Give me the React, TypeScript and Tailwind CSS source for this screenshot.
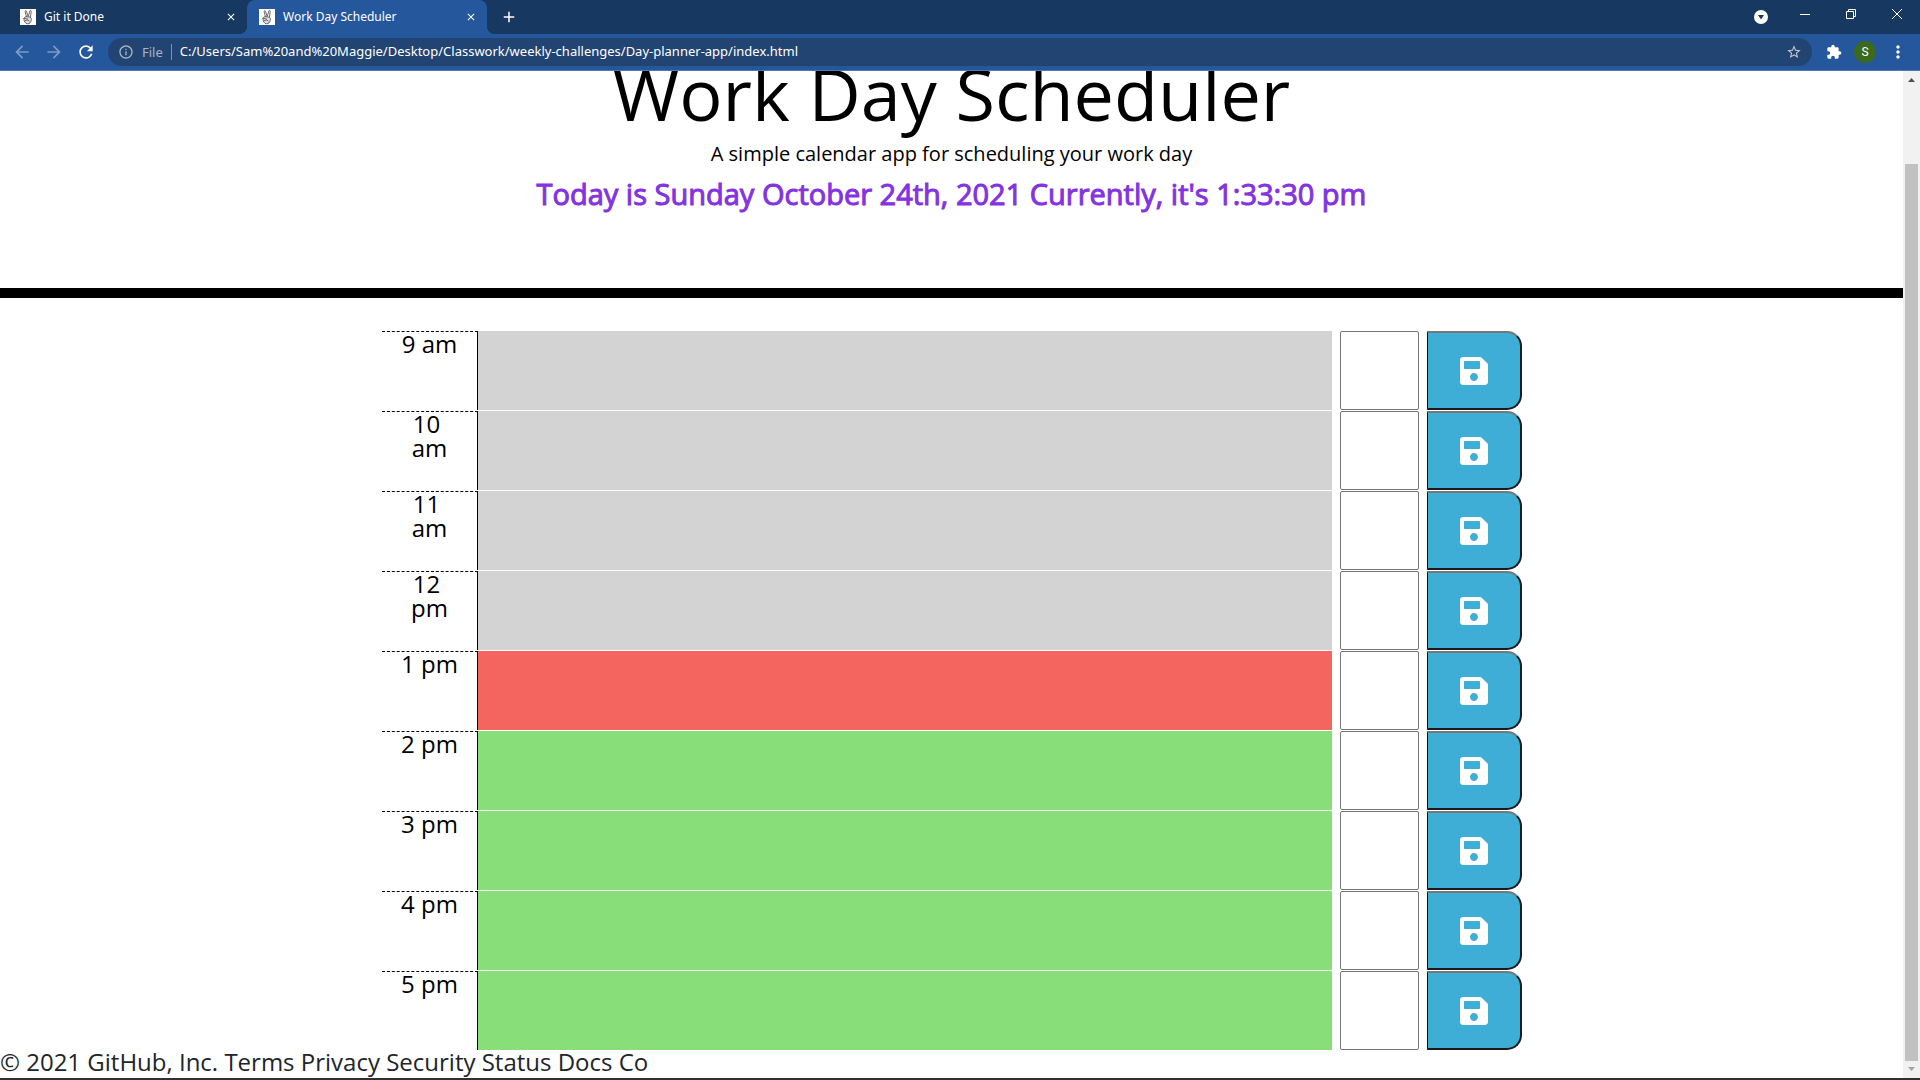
import { FaSave } from 'react-icons/fa';
import { MdArrowBack, MdArrowForward, MdRefresh, MdExtension, MdMoreVert, MdStarBorder, MdInfoOutline, MdClose, MdAdd } from 'react-icons/md';

type Phase = 'past' | 'present' | 'future';

const hours: { label: string; phase: Phase }[] = [
  { label: '9 am', phase: 'past' },
  { label: '10 am', phase: 'past' },
  { label: '11 am', phase: 'past' },
  { label: '12 pm', phase: 'past' },
  { label: '1 pm', phase: 'present' },
  { label: '2 pm', phase: 'future' },
  { label: '3 pm', phase: 'future' },
  { label: '4 pm', phase: 'future' },
  { label: '5 pm', phase: 'future' },
];

const phaseColor: Record<Phase, string> = {
  past: 'bg-[#d3d3d3]',
  present: 'bg-[#f56560]',
  future: 'bg-[#88de79]',
};

function Favicon() {
  return (
    <svg viewBox="0 0 16 16" className="size-4 shrink-0 bg-white" fill="none" stroke="#444" strokeWidth=".8" strokeLinejoin="round" strokeLinecap="round">
      <path d="M6.500 8L5.200 2.600c-.2-1 1-1.300 1.300-.4L8 7M8.500 7l1.300-5c.3-1 1.600-.7 1.400.3L10.500 8" />
      <path d="M4 9.500c.4-1.500 1.800-2.200 3-1.800l3 .4c1.400.4 1.600 2 1.200 3.400-.4 2-1.700 3.300-3.600 3.300C5.300 14.800 3.600 12 4 9.500z" fill="#ddd" />
      <path d="M5.500 9.500l2 .5M5.500 11.500l2-.5 1.500 1" />
    </svg>
  );
}

function Tab({ title, active }: { title: string; active?: boolean }) {
  return (
    <div
      className={
        active
          ? 'relative flex h-full w-[240px] items-center rounded-t-lg bg-[#24579c] pr-2.5 pl-3'
          : 'flex h-full w-[247px] items-center pr-2.5 pl-5'
      }
    >
      {active && (
        <>
          <span className="absolute bottom-0 -left-2 size-2 bg-[radial-gradient(circle_at_0_0,#163861_8px,#24579c_8px)]" />
          <span className="absolute -right-2 bottom-0 size-2 bg-[radial-gradient(circle_at_100%_0,#163861_8px,#24579c_8px)]" />
        </>
      )}
      <Favicon />
      <span className="ml-2 flex-1 truncate text-xs text-white">{title}</span>
      <button type="button" aria-label={`Close ${title}`} className="text-white">
        <MdClose className="size-3" />
      </button>
    </div>
  );
}

function BrowserChrome() {
  return (
    <div className="shrink-0 font-['Noto_Sans','Open_Sans',sans-serif]">
      <div className="flex h-[34px] items-center bg-[#163861]">
        <Tab title="Git it Done" />
        <Tab title="Work Day Scheduler" active />
        <button type="button" aria-label="New tab" className="ml-[13px] text-white">
          <MdAdd className="size-[18px]" />
        </button>
        <div className="mr-[18px] ml-auto flex h-full items-center text-white">
          <button type="button" aria-label="Search tabs" className="mr-8">
            <svg viewBox="0 0 14 14" className="size-3.5">
              <circle cx="7" cy="7" r="7" fill="#fff" />
              <path d="M4 5h6L7 9.500z" fill="#163861" />
            </svg>
          </button>
          <button type="button" aria-label="Minimize" className="mr-9">
            <svg viewBox="0 0 10 10" className="mb-1.5 size-2.5">
              <path d="M0 5.500h10" stroke="#fff" />
            </svg>
          </button>
          <button type="button" aria-label="Restore" className="mr-9">
            <svg viewBox="0 0 10 10" className="mb-1.5 size-2.5" fill="none" stroke="#fff">
              <path d="M.5 2.500h7v7h-7zM2.500 2.500v-2h7v7h-2" />
            </svg>
          </button>
          <button type="button" aria-label="Close window">
            <svg viewBox="0 0 10 10" className="mb-1.5 size-2.5" stroke="#fff">
              <path d="M0 0l10 10M10 0L0 10" />
            </svg>
          </button>
        </div>
      </div>
      <div className="flex h-[37px] items-center border-b border-[#4f7ab5] bg-[#24579c] text-white">
        <button type="button" aria-label="Back" className="ml-3 text-[#7c9bc6]">
          <MdArrowBack className="size-5" />
        </button>
        <button type="button" aria-label="Forward" className="ml-3 text-[#7c9bc6]">
          <MdArrowForward className="size-5" />
        </button>
        <button type="button" aria-label="Reload" className="ml-3">
          <MdRefresh className="size-5" />
        </button>
        <div className="ml-3 flex h-7 flex-1 items-center rounded-full bg-[#224472] px-2.5">
          <MdInfoOutline className="size-4 shrink-0 text-[#a7b4c7]" />
          <span className="ml-2 border-r border-[#8193ac] pr-2 text-[13px] leading-4 text-[#a7b4c7]">File</span>
          <input
            type="text"
            aria-label="Address"
            readOnly
            value="C:/Users/Sam%20and%20Maggie/Desktop/Classwork/weekly-challenges/Day-planner-app/index.html"
            className="ml-2 min-w-0 flex-1 bg-transparent text-[13px] text-white outline-none"
          />
          <button type="button" aria-label="Bookmark" className="text-[#c3cad4]">
            <MdStarBorder className="size-4" />
          </button>
        </div>
        <button type="button" aria-label="Extensions" className="ml-3.5">
          <MdExtension className="size-4" />
        </button>
        <button
          type="button"
          aria-label="Profile"
          className="ml-3 flex size-[22px] items-center justify-center rounded-full bg-[#3b691d] font-['Roboto',sans-serif] text-xs"
        >
          S
        </button>
        <button type="button" aria-label="Menu" className="mr-3 ml-3">
          <MdMoreVert className="size-5" />
        </button>
      </div>
    </div>
  );
}

function TimeBlock({ label, phase }: { label: string; phase: Phase }) {
  return (
    <div className="grid h-[79px] grid-cols-[96px_1fr_95px_95px]">
      <div className="border-t border-r border-t-black border-r-black px-[15px] text-center whitespace-break-spaces [border-top-style:dashed]">
        {label}
      </div>
      <textarea
        aria-label={`Events at ${label}`}
        className={`block h-full w-full resize-none outline-none ${phaseColor[phase]}`}
      />
      <div className="px-2">
        <textarea
          aria-label={`Note for ${label}`}
          className="block h-full w-full resize-none rounded-xs border border-[#767676] outline-none"
        />
      </div>
      <button
        type="button"
        aria-label={`Save ${label}`}
        className="flex items-center justify-center rounded-r-[15px] border-2 border-l border-t-[#767676] border-r-[#1d1a1e] border-b-[#1d1a1e] border-l-black bg-[#3eaed6] text-white"
      >
        <FaSave className="size-8" />
      </button>
    </div>
  );
}

function Scrollbar() {
  return (
    <div className="flex w-[17px] shrink-0 flex-col items-center bg-[#f1f1f1]">
      <svg viewBox="0 0 17 17" className="size-[17px]">
        <path d="M5 11h7L8.500 7z" fill="#505050" />
      </svg>
      <div className="h-[76px]" />
      <div className="w-[13px] flex-1 bg-[#c1c1c1]" />
      <svg viewBox="0 0 17 17" className="size-[17px]">
        <path d="M5 6h7l-3.500 4z" fill="#a3a3a3" />
      </svg>
    </div>
  );
}

export default function App() {
  return (
    <div className="flex h-screen flex-col overflow-hidden bg-white">
      <BrowserChrome />
      <div className="flex min-h-0 flex-1">
        <div className="min-w-0 flex-1 overflow-hidden font-['Open_Sans',sans-serif] text-2xl leading-6 text-black">
          <header className="-mt-[21px] border-b-[10px] border-black pb-[76px] text-center">
            <h1 className="text-[72px] leading-[86px] font-normal">Work Day Scheduler</h1>
            <p className="mt-[3px] text-xl leading-[30px]">A simple calendar app for scheduling your work day</p>
            <p className="mt-[7px] text-[29px] leading-[36px] font-normal text-[#8333e1] [-webkit-text-stroke:1px_#8333e1]">
              Today is Sunday October 24th, 2021 Currently, it's 1:33:30 pm
            </p>
          </header>
          <main className="mx-auto mt-[33px] flex max-w-[1141px] flex-col gap-px pl-px">
            {hours.map((h) => (
              <TimeBlock key={h.label} label={h.label} phase={h.phase} />
            ))}
          </main>
          <footer className="text-[#212529]">© 2021 GitHub, Inc. Terms Privacy Security Status Docs Co</footer>
        </div>
        <Scrollbar />
      </div>
      <div className="h-0.5 shrink-0 bg-[#303033]" />
    </div>
  );
}
